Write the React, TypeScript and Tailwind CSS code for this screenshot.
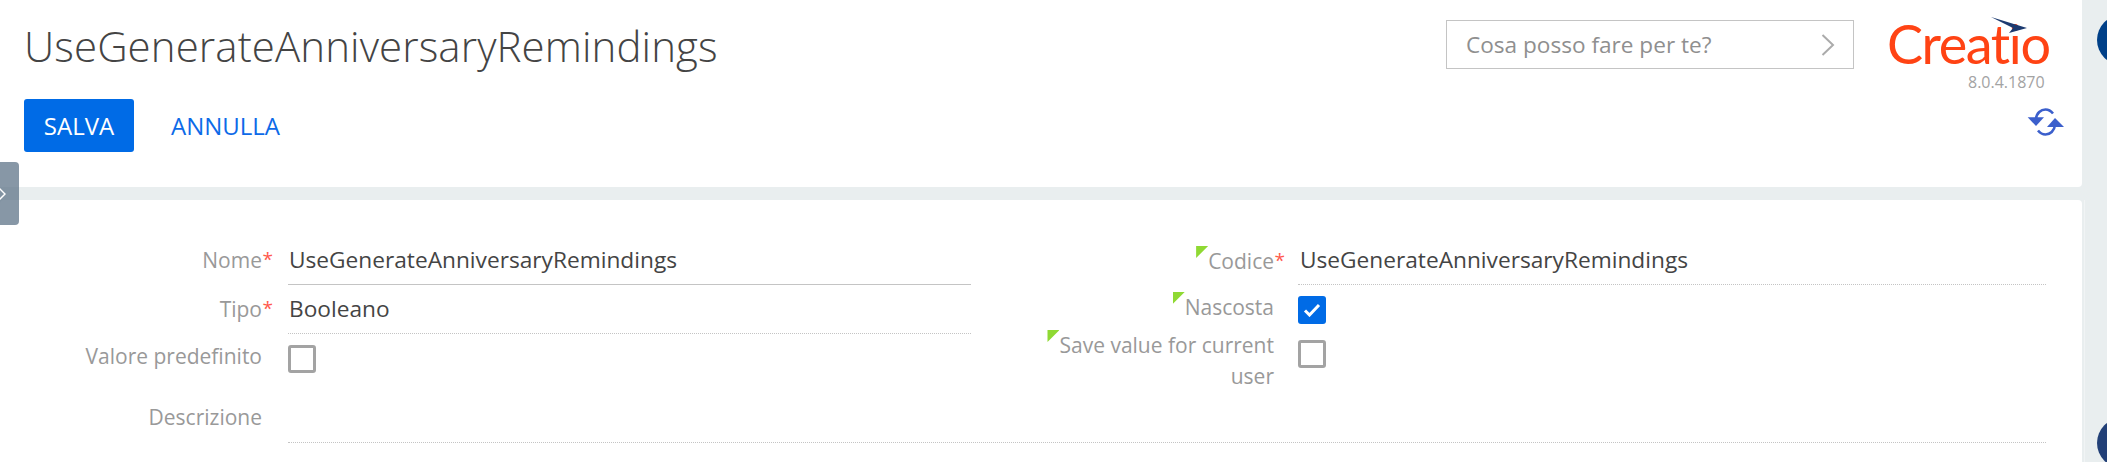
import type { ReactNode } from 'react';

const font = { fontFamily: '"Open Sans", sans-serif' };

function Marker() {
    return <span className="absolute -left-[12px] top-0 w-[12px] h-[12px] bg-[#8fd933] [clip-path:polygon(0_0,100%_0,0_100%)]" />;
}

function Label({ text, required, marker, width, top }: { text: ReactNode; required?: boolean; marker?: boolean; width: string; top: string }) {
    return (
        <div className={`${width} ${top} shrink-0 text-right text-[21px] leading-[31px] text-[#999999]`}>
            <span className="relative inline-block">
                {marker && <Marker />}
                {text}
                {required && <span className="absolute -right-[11px] -top-[1px] text-[19px] text-[#ff5a4d]">*</span>}
            </span>
        </div>
    );
}

function Checkbox({ checked }: { checked?: boolean }) {
    if (checked) {
        return (
            <div className="w-[28px] h-[28px] rounded-[3px] bg-[#006be6] flex items-center justify-center">
                <svg width="18" height="14" viewBox="0 0 18 14" fill="none">
                    <path d="M2 7.5 L6.5 12 L16 2" stroke="white" strokeWidth="3" />
                </svg>
            </div>
        );
    }
    return <div className="w-[28px] h-[28px] rounded-[3px] border-[3px] border-[#a3a3a3] bg-white" />;
}

function Logo() {
    return (
        <div className="relative w-[161px] h-[47px]">
            <span className="absolute -left-[1px] top-[3px] text-[54px] leading-[47px] tracking-[-1.4px] text-[#ff4314]" style={{ fontFamily: 'Lato, sans-serif' }}>
                Creatio
            </span>
            <svg className="absolute left-[103px] top-0" width="37" height="16" viewBox="0 0 37 16">
                <path d="M0 0 L36 11 L18 16 L22 11 Z" fill="#1c3a70" />
            </svg>
        </div>
    );
}

function RefreshIcon() {
    return (
        <svg width="37" height="28" viewBox="0 0 37 28" fill="none">
            <path d="M9 11 C9.5 5 14 1.5 18.5 1.5 C21.5 1.5 24 3 26 5.5" stroke="#3b5fcc" strokeWidth="2.6" />
            <path d="M0.7 9.3 L17 9.3 L9 18 Z" fill="#3b5fcc" />
            <path d="M28 17 C27.5 23 23 26.5 18.5 26.5 C15.5 26.5 13 25 11 22.5" stroke="#3b5fcc" strokeWidth="2.6" />
            <path d="M20 19 L37 19 L28 10 Z" fill="#3b5fcc" />
        </svg>
    );
}

export default function App() {
    return (
        <div className="relative h-[462px] w-full overflow-hidden bg-[#e9eeef]" style={font}>
            <div className="w-[2082px]">
                <header className="h-[187px] bg-white rounded-br-[4px] flex justify-between">
                    <div className="pl-[24px]">
                        <h1 className="pt-[17px] text-[42px] leading-[57px] font-light tracking-[0.1px] text-[#444444]">UseGenerateAnniversaryRemindings</h1>
                        <div className="mt-[25px] flex items-center gap-[37px]">
                            <button className="w-[110px] h-[53px] rounded-[3px] bg-[#006be6] text-white text-[24px]">SALVA</button>
                            <button className="text-[#0d6ae8] text-[24px]">ANNULLA</button>
                        </div>
                    </div>
                    <div className="flex gap-[34px] pt-[20px] pr-[18px]">
                        <div className="w-[408px] h-[49px] border border-[#c4c4c4] pl-[19px] pr-[18px] flex items-center justify-between text-[22.6px] text-[#8f8f8f]">
                            <span>Cosa posso fare per te?</span>
                            <svg width="14" height="22" viewBox="0 0 14 22" fill="none">
                                <path d="M1.5 1 L12 11 L1.5 21" stroke="#ababab" strokeWidth="2" />
                            </svg>
                        </div>
                        <div className="w-[176px] -mt-[3px] flex flex-col">
                            <Logo />
                            <div className="mt-[7px] pl-[80px] text-[16px] leading-[22px] text-[#a3a3a3]">8.0.4.1870</div>
                            <div className="mt-[15px] pl-[139px]">
                                <RefreshIcon />
                            </div>
                        </div>
                    </div>
                </header>

                <main className="mt-[13px] h-[262px] bg-white rounded-t-[4px] pt-[36px] pr-[36px] text-[22.7px]">
                    <div className="flex">
                        <div className="w-[971px] shrink-0">
                            <div className="h-[49px] flex">
                                <Label text="Nome" required width="w-[262px]" top="pt-[9px]" />
                                <div className="ml-[26px] flex-1 border-b border-[#c4c4c4] pl-[1px] pt-[10px] leading-[28px] text-[#444444]">UseGenerateAnniversaryRemindings</div>
                            </div>
                            <div className="h-[49px] flex">
                                <Label text="Tipo" required width="w-[262px]" top="pt-[9px]" />
                                <div className="ml-[26px] flex-1 border-b border-dotted border-[#c4c4c4] pl-[1px] pt-[10px] leading-[28px] text-[#444444]">Booleano</div>
                            </div>
                            <div className="h-[61px] flex">
                                <Label text="Valore predefinito" width="w-[262px]" top="pt-[7px]" />
                                <div className="ml-[26px] pt-[11px]">
                                    <Checkbox />
                                </div>
                            </div>
                        </div>
                        <div className="flex-1">
                            <div className="h-[49px] flex">
                                <Label text="Codice" required marker width="w-[303px]" top="pt-[10px]" />
                                <div className="ml-[24px] flex-1 border-b border-dotted border-[#c4c4c4] pl-[2px] pt-[10px] leading-[28px] text-[#444444]">UseGenerateAnniversaryRemindings</div>
                            </div>
                            <div className="h-[44px] flex">
                                <Label text="Nascosta" marker width="w-[303px]" top="pt-[7px]" />
                                <div className="ml-[24px] pt-[11px]">
                                    <Checkbox checked />
                                </div>
                            </div>
                            <div className="h-[66px] flex">
                                <Label text={<>Save value for current<br />user</>} marker width="w-[303px]" top="pt-[1px]" />
                                <div className="ml-[24px] pt-[11px]">
                                    <Checkbox />
                                </div>
                            </div>
                        </div>
                    </div>
                    <div className="h-[48px] flex">
                        <Label text="Descrizione" width="w-[262px]" top="pt-[7px]" />
                        <div className="ml-[26px] flex-1 border-b border-dotted border-[#c4c4c4]" />
                    </div>
                </main>
            </div>

            <div className="absolute left-[2084px] top-[200px] bottom-0 w-px bg-[#f1f4f5]" />

            <div className="absolute left-0 top-[162px] w-[19px] h-[63px] rounded-r-[4px] bg-[#5f7488]/75 flex items-center">
                <svg className="-ml-[3px]" width="9" height="16" viewBox="0 0 9 16" fill="none">
                    <path d="M1 1 L8 8 L1 15" stroke="white" strokeWidth="1.5" />
                </svg>
            </div>

            <div className="absolute left-[2097px] top-[15px] w-[50px] h-[50px] rounded-full bg-[#004088]" />
            <div className="absolute left-[2097px] top-[418px] w-[50px] h-[50px] rounded-full bg-[#224077]" />
        </div>
    );
}
